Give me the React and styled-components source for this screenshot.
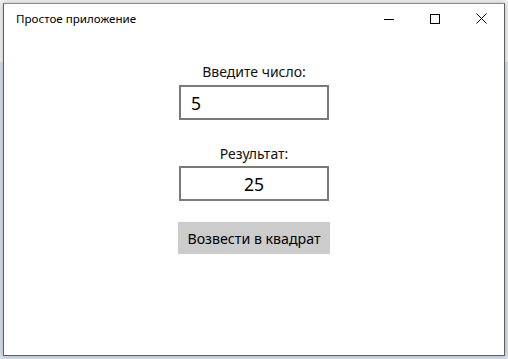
import React from "react";
import styled, { createGlobalStyle } from "styled-components";

const Global = createGlobalStyle`
  html, body { margin: 0; padding: 0; }
  body {
    background: #e9ecef;
    font-family: "Noto Sans", "Open Sans", sans-serif;
  }
`;

const Desktop = styled.div`
  width: 508px;
  height: 359px;
  box-sizing: border-box;
  padding: 3px 0 0 3px;
  background: linear-gradient(#f2f2f2 0, #f2f2f2 62px, #d9e1ea 62px, #d9e1ea 100%);
  overflow: hidden;
`;

const Window = styled.div`
  width: 502px;
  height: 353px;
  box-sizing: border-box;
  border: 1px solid #5f5f5f;
  border-top-color: #8a8a8a;
  background: #ffffff;
  display: flex;
  flex-direction: column;
  box-shadow: 0 0 6px rgba(0, 0, 0, 0.25);
`;

const TitleBar = styled.div`
  height: 29px;
  display: flex;
  align-items: center;
  flex-shrink: 0;
`;

const Title = styled.div`
  flex: 1;
  padding-left: 12px;
  font-size: 11.6px;
  color: #000;
  padding-bottom: 1px;
`;

const CtrlButton = styled.div`
  width: 46px;
  height: 29px;
  display: flex;
  align-items: center;
  justify-content: center;
`;

const Content = styled.div`
  display: flex;
  flex-direction: column;
  align-items: center;
  padding-top: 29px;
`;

const Label = styled.div`
  font-size: 14px;
  line-height: 20px;
  color: #111;
  margin-top: ${(p) => p.$mt || 0}px;
`;

const Field = styled.div`
  width: 150px;
  height: 35px;
  box-sizing: border-box;
  border: 2px solid #7a7a7a;
  display: flex;
  align-items: center;
  justify-content: ${(p) => (p.$center ? "center" : "flex-start")};
  padding-left: ${(p) => (p.$center ? 0 : 10)}px;
  font-size: 17.5px;
  color: #000;
  margin-top: ${(p) => p.$mt || 0}px;
`;

const Button = styled.div`
  width: 152px;
  height: 32px;
  background: #cccccc;
  display: flex;
  align-items: center;
  justify-content: center;
  font-size: 14.2px;
  color: #000;
  margin-top: 21px;
`;

export default function App() {
  return (
    <>
      <Global />
      <Desktop>
        <Window>
          <TitleBar>
            <Title>Простое приложение</Title>
            <CtrlButton>
              <svg width="10" height="10" viewBox="0 0 10 10">
                <path d="M0 5.5H10" stroke="#000" strokeWidth="1" />
              </svg>
            </CtrlButton>
            <CtrlButton>
              <svg width="10" height="10" viewBox="0 0 10 10">
                <rect x="0.5" y="0.5" width="9" height="9" fill="none" stroke="#000" strokeWidth="1" />
              </svg>
            </CtrlButton>
            <CtrlButton>
              <svg width="11" height="11" viewBox="0 0 11 11">
                <path d="M0.5 0.5L10.5 10.5M10.5 0.5L0.5 10.5" stroke="#000" strokeWidth="1" />
              </svg>
            </CtrlButton>
          </TitleBar>
          <Content>
            <Label>Введите число:</Label>
            <Field $mt={3}>5</Field>
            <Label $mt={24}>Результат:</Label>
            <Field $mt={2} $center>25</Field>
            <Button>Возвести в квадрат</Button>
          </Content>
        </Window>
      </Desktop>
    </>
  );
}
